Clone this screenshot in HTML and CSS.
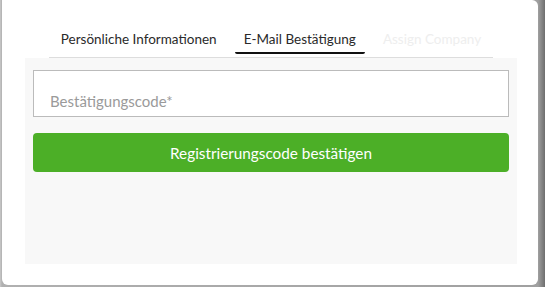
FILE: index.html
```html
<!DOCTYPE html>
<html lang="de">
<head>
<meta charset="utf-8">
<link rel="stylesheet" href="styles.css">
</head>
<body>
<div class="modal">
  <div class="tabs-wrap">
    <nav class="tabs">
      <span class="tab">Persönliche Informationen</span>
      <span class="tab active">E-Mail Bestätigung</span>
      <span class="tab disabled">Assign Company</span>
    </nav>
  </div>
  <div class="panel">
    <div class="field">
      <span class="placeholder">Bestätigungscode*</span>
    </div>
    <button class="btn">Registrierungscode bestätigen</button>
  </div>
</div>
</body>
</html>
```

FILE: styles.css
```css
html, body {
  margin: 0;
  padding: 0;
}
body {
  width: 545px;
  height: 287px;
  background: linear-gradient(90deg, #c8c8c8 0, #b0b0b0 2px, #a0a0a0 538px, #6e6e6e 545px);
  font-family: Lato, "Open Sans", sans-serif;
  overflow: hidden;
}
.modal {
  margin-left: 2px;
  width: 536px;
  height: 285px;
  background: #fff;
  border-radius: 0 6px 6px 6px;
  padding: 0 21px 0 23px;
  box-sizing: border-box;
  display: flex;
  flex-direction: column;
}
.tabs-wrap {
  padding: 0 24px;
}
.tabs {
  display: flex;
  justify-content: center;
  gap: 9px;
  border-bottom: 1px solid #ddd;
  padding-top: 27px;
  height: 30px;
  box-sizing: content-box;
}
.tab {
  flex: none;
  white-space: nowrap;
  font-size: 13.5px;
  color: #2a2a2a;
  padding: 0 9px;
  height: 27px;
  line-height: 24px;
  box-sizing: border-box;
}
.tab.active {
  border-bottom: 2px solid #111;
  border-radius: 2px;
}
.tab.disabled {
  color: #eeeeee;
}
.panel {
  background: #f8f8f8;
  height: 206px;
  padding: 12px 8px 0;
  box-sizing: border-box;
  display: flex;
  flex-direction: column;
  gap: 16px;
}
.field {
  height: 47px;
  border: 1px solid #bbb;
  background: #fff;
  box-sizing: border-box;
  padding: 20px 16px 0;
}
.placeholder {
  font-size: 15px;
  color: #9a9a9a;
  line-height: 20px;
}
.btn {
  height: 39px;
  border: 0;
  border-radius: 4px;
  background: #4caf27;
  color: #fff;
  font-family: inherit;
  font-size: 15.3px;
  padding: 0;
  cursor: pointer;
}
```
